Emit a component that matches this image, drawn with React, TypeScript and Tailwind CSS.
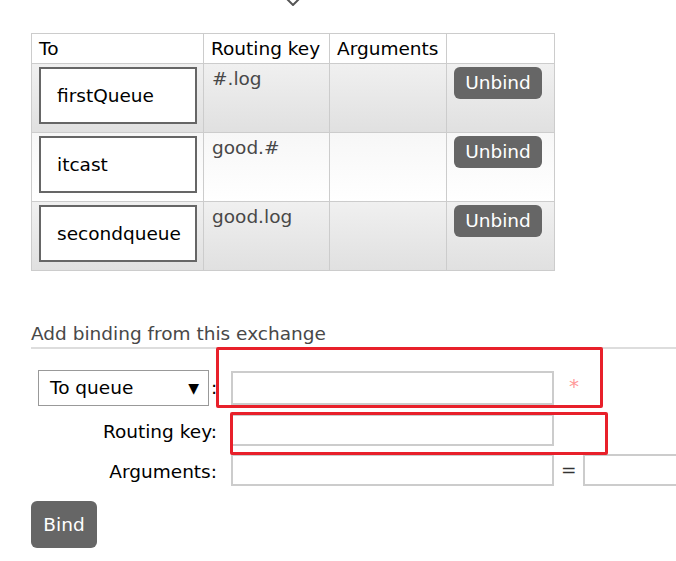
import React from "react";

type Binding = { queue: string; key: string };

const bindings: Binding[] = [
  { queue: "firstQueue", key: "#.log" },
  { queue: "itcast", key: "good.#" },
  { queue: "secondqueue", key: "good.log" },
];

const rowBg = [
  "bg-[linear-gradient(#f0f0f0,#e0e0e0)]",
  "bg-[linear-gradient(#f7f7f7,#ffffff)]",
  "bg-[linear-gradient(#f0f0f0,#e0e0e0)]",
];

function Button({ label, className }: { label: string; className: string }) {
  return (
    <button
      type="button"
      className={`rounded-[6px] bg-[#666] text-[18.5px] text-white ${className}`}
    >
      {label}
    </button>
  );
}

export default function App() {
  return (
    <div className="relative h-[561px] w-[676px] overflow-hidden bg-white font-['DejaVu_Sans',Verdana,sans-serif] text-[18.5px] text-black">
      <svg width="14" height="6" viewBox="0 0 14 6" className="ml-[286px] block">
        <path d="M1 -1 L7 5 L13 -1" fill="none" stroke="#555" strokeWidth="2" />
      </svg>

      <table className="ml-[31px] mt-[27px] w-[524px] table-fixed border-collapse">
        <colgroup>
          <col className="w-[172px]" />
          <col className="w-[126px]" />
          <col className="w-[117px]" />
          <col className="w-[108px]" />
        </colgroup>
        <thead>
          <tr className="h-[30px]">
            <th className="border border-[#ccc] px-[7px] text-left font-normal">To</th>
            <th className="border border-[#ccc] px-[7px] text-left font-normal">Routing key</th>
            <th className="border border-[#ccc] px-[7px] text-left font-normal">Arguments</th>
            <th className="border border-[#ccc]"></th>
          </tr>
        </thead>
        <tbody>
          {bindings.map((b, i) => (
            <tr key={b.queue} className={`h-[69px] ${rowBg[i]}`}>
              <td className="border border-[#ccc] pb-[7px] pl-[7px] pt-[3px] align-top">
                <div className="flex h-[57px] w-[158px] items-center border-2 border-[#666] bg-white pl-[16px]">
                  {b.queue}
                </div>
              </td>
              <td className="border border-[#ccc] pl-[8px] pt-[2px] align-top leading-[26px] text-[#484848]">
                {b.key}
              </td>
              <td className="border border-[#ccc]"></td>
              <td className="border border-[#ccc] pl-[7px] pt-[3px] align-top">
                <Button label="Unbind" className="h-[32px] w-[88px] leading-[32px]" />
              </td>
            </tr>
          ))}
        </tbody>
      </table>

      <h3 className="ml-[31px] mt-[50px] border-b-2 border-[#ddd] text-[18.5px] font-normal leading-[26px] text-[#484848]">
        Add binding from this exchange
      </h3>

      <div className="ml-[31px] mt-[21px] flex flex-col">
        <div className="flex h-[36px] items-center">
          <div className="ml-[7px] flex h-[36px] w-[171px] shrink-0 items-center justify-between border border-[#999] pl-[11px] pr-[9px]">
            <span>To queue</span>
            <span className="text-[14px]">▼</span>
          </div>
          <span className="ml-[2px] w-[6px] shrink-0">:</span>
          <div className="ml-[14px] h-[34px] w-[323px] shrink-0 border-2 border-[#ccc]"></div>
          <span className="ml-[15px] mt-[-4px] shrink-0 text-[20px] text-[#f99]">*</span>
        </div>

        <div className="mt-[8px] flex h-[32px] items-center">
          <span className="w-[186px] shrink-0 pt-[3px] text-right">Routing key:</span>
          <div className="ml-[14px] h-[32px] w-[323px] shrink-0 border-2 border-[#ccc]"></div>
        </div>

        <div className="mt-[8px] flex h-[32px] items-center">
          <span className="w-[186px] shrink-0 pt-[3px] text-right">Arguments:</span>
          <div className="ml-[14px] h-[32px] w-[323px] shrink-0 border-2 border-[#ccc]"></div>
          <span className="ml-[7px] shrink-0 text-[#333]">=</span>
          <div className="ml-[6px] h-[32px] w-[120px] shrink-0 border-2 border-[#ccc]"></div>
        </div>

        <Button label="Bind" className="mt-[15px] h-[47px] w-[66px]" />
      </div>

      <div className="absolute left-[216px] top-[347px] h-[61px] w-[387px] rounded-[2px] border-[3px] border-[#e8202a]"></div>
      <div className="absolute left-[230px] top-[412px] h-[43px] w-[378px] rounded-[2px] border-[3px] border-[#e8202a]"></div>
    </div>
  );
}
